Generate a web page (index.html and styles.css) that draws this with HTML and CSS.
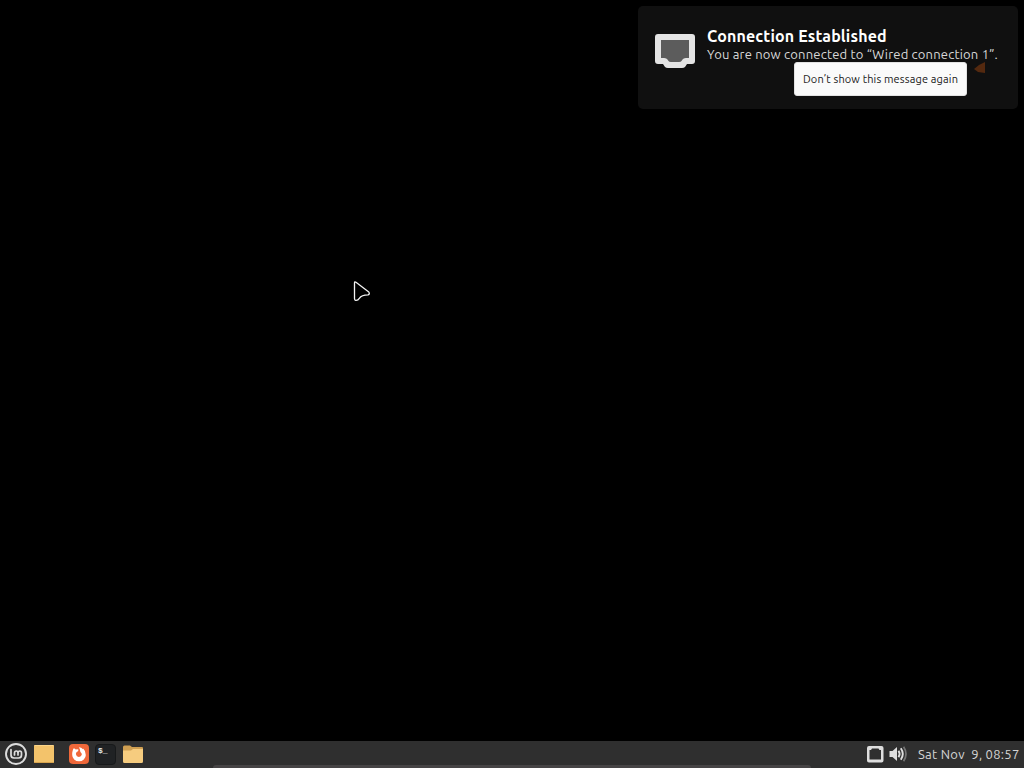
FILE: index.html
```html
<!DOCTYPE html>
<html lang="en">
<head>
    <meta charset="UTF-8">
    <title>Desktop</title>
    <link rel="stylesheet" href="styles.css">
</head>
<body>
    <div class="desktop">
        <div class="notification">
            <svg class="notification-icon" width="40" height="36" viewBox="0 0 40 36">
                <path fill="#e4e4e4" d="M3 0H37Q40 0 40 3V27Q40 30 37 30H32L30 33Q29 34 27 34H13Q11 34 10 33L8 30H3Q0 30 0 27V3Q0 0 3 0Z"/>
                <path fill="#5c5c5c" d="M6 6H34V24H31Q28 24 26.5 27Q26 28 24 28H16Q14 28 13.5 27Q12 24 9 24H6Z"/>
            </svg>
            <div class="notification-body">
                <h1>Connection Established</h1>
                <p>You are now connected to “Wired connection 1”.</p>
                <button type="button">Don’t show this message again</button>
            </div>
            <svg class="marker" width="12" height="12" viewBox="0 0 12 12">
                <path fill="#54290f" d="M0 7L5 3L11 0V11L4 10Z"/>
            </svg>
        </div>

        <svg class="pointer" width="20" height="24" viewBox="0 0 20 24">
            <path fill="#000" stroke="#f4f4f4" stroke-width="1.3" stroke-linejoin="round" d="M2.5 3Q2.5 1.2 4 2.3L16.8 12Q18.2 14 16 14.8Q9.5 14.8 7.5 18.2Q5.8 20.8 3.6 20.4Q2.5 20.2 2.5 18.5Z"/>
        </svg>

        <!-- panel -->
        <div class="panel">
            <div class="launchers">
                <svg class="menu" width="24" height="24" viewBox="0 0 24 24" fill="none" stroke="#dcdcdc">
                    <circle cx="12" cy="12" r="10" stroke-width="1.9"/>
                    <path stroke-width="1.7" stroke-linecap="round" d="M7 7.5V13Q7 16 10 16H14.5Q17.5 16 17.5 13V11Q17.5 9 15.8 9T14 11V13M14 11Q14 9 12.3 9T10.5 11V13"/>
                </svg>
                <svg class="show-desktop" width="22" height="20" viewBox="0 0 22 20">
                    <rect x="1" y="1" width="20" height="18" rx="1" fill="#f3c36b"/>
                    <path stroke="#fbd58a" d="M1.5 1.5H20.5"/>
                    <path stroke="#d8a54f" d="M1.5 18.5H20.5"/>
                </svg>
                <svg class="firefox" width="20" height="20" viewBox="0 0 20 20">
                    <rect width="20" height="20" rx="4" fill="#f0683a"/>
                    <path fill="#fff" d="M3.6 7Q4 4.8 5 4Q5.7 5.4 7 5.5Q8.2 5.2 9.4 5.6L9.2 7L7.5 8.2Q6.7 9.2 7 10.5A3 3 0 0 0 12.8 10.8Q13 9 11.4 8Q11.4 5 9.8 3.2Q12.4 3.2 14 5.2L14.2 4.4Q17 7 16.8 11A6.8 6.3 0 0 1 3.2 11Q3 9 3.6 7Z"/>
                </svg>
                <div class="terminal">$_</div>
                <svg class="files" width="22" height="20" viewBox="0 0 22 20">
                    <path fill="#cf9f52" d="M1 3Q1 1.5 2.5 1.5H8L10 3H20Q21 3 21 4V8H1Z"/>
                    <path fill="#f6cc7f" d="M1 6.5H9L11 5H21V17.5Q21 19 19.5 19H2.5Q1 19 1 17.5Z"/>
                </svg>
            </div>
            <div class="tray">
                <svg width="18" height="18" viewBox="0 0 18 18">
                    <path fill="#dedede" fill-rule="evenodd" d="M3 1H15.5Q17.5 1 17.5 3V15.5Q17.5 17.5 15.5 17.5H3Q1 17.5 1 15.5V3Q1 1 3 1ZM6 3.5L5 5H3.5V14.5H15V5H13.5L12.5 3.5Z"/>
                </svg>
                <svg class="volume" width="19" height="16" viewBox="0 0 19 16" fill="none">
                    <path fill="#dedede" d="M0.5 5H3.5L8 1V15L3.5 11H0.5Z"/>
                    <path stroke="#dedede" stroke-width="1.9" d="M9.5 4.8Q11.7 8 9.5 11.2M11.8 2.3Q15.8 8 11.8 13.7"/>
                    <path stroke="#747474" stroke-width="1.7" d="M14.6 0.8Q19.4 8 14.6 15.2"/>
                </svg>
                <span class="clock">Sat Nov&nbsp; 9, 08:57</span>
            </div>
            <div class="panel-edge"></div>
        </div>
    </div>
</body>
</html>
```
FILE: styles.css
```css
*{ margin: 0; padding: 0; box-sizing: border-box; }
body{ background: #000; font-family: Ubuntu, "Noto Sans", "Open Sans", sans-serif; overflow: hidden; }
svg{ display: block; flex: none; }
.desktop{ position: relative; display: flex; flex-direction: column; height: 768px; background: #000; }

.notification{ position: relative; display: flex; align-self: flex-end; width: 380px; height: 103px; margin: 6px 6px 0 0; padding: 20px 0 0 17px; background: #101010; border-radius: 5px; }
.notification-icon{ margin-top: 8px; }
.notification-body{ width: 291px; margin-left: 12px; white-space: nowrap; }
.notification h1{ height: 20px; line-height: 20px; font-size: 16px; font-weight: bold; letter-spacing: 0.14px; color: #fff; }
.notification p{ height: 16px; line-height: 17px; font-size: 13px; letter-spacing: 0.19px; color: #d8d8d8; }
.notification button{ display: block; width: 173px; height: 34px; margin-left: 87px; background: #fafafa; border: 1px solid #e2e2e2; border-radius: 3px; font-family: inherit; font-size: 11px; letter-spacing: 0.14px; color: #202020; white-space: nowrap; }
.marker{ position: absolute; left: 336px; top: 56px; }
.pointer{ position: absolute; left: 352px; top: 280px; }

.panel{ position: relative; display: flex; justify-content: space-between; align-items: center; height: 27px; margin-top: auto; padding: 0 4px 1px; background: #2f2f2f; }
.launchers,.tray{ display: flex; align-items: center; }
.show-desktop{ margin-left: 5px; }
.firefox{ margin-left: 14px; }
.terminal{ width: 21px; height: 21px; margin-left: 6px; padding: 1px 0 0 2px; background: #202224; border: 1px solid #17191a; border-radius: 4px; font: bold 8px/9px "Liberation Mono", monospace; color: #e8e8e8; }
.files{ margin-left: 6px; }
.volume{ margin-left: 5px; }
.clock{ width: 102px; margin-left: 10px; font-size: 13px; line-height: 20px; letter-spacing: 0.28px; color: #d4d4d4; white-space: nowrap; }
.panel-edge{ position: absolute; left: 213px; bottom: 0; width: 598px; height: 3px; background: #464445; border-radius: 3px 3px 0 0; }
```
